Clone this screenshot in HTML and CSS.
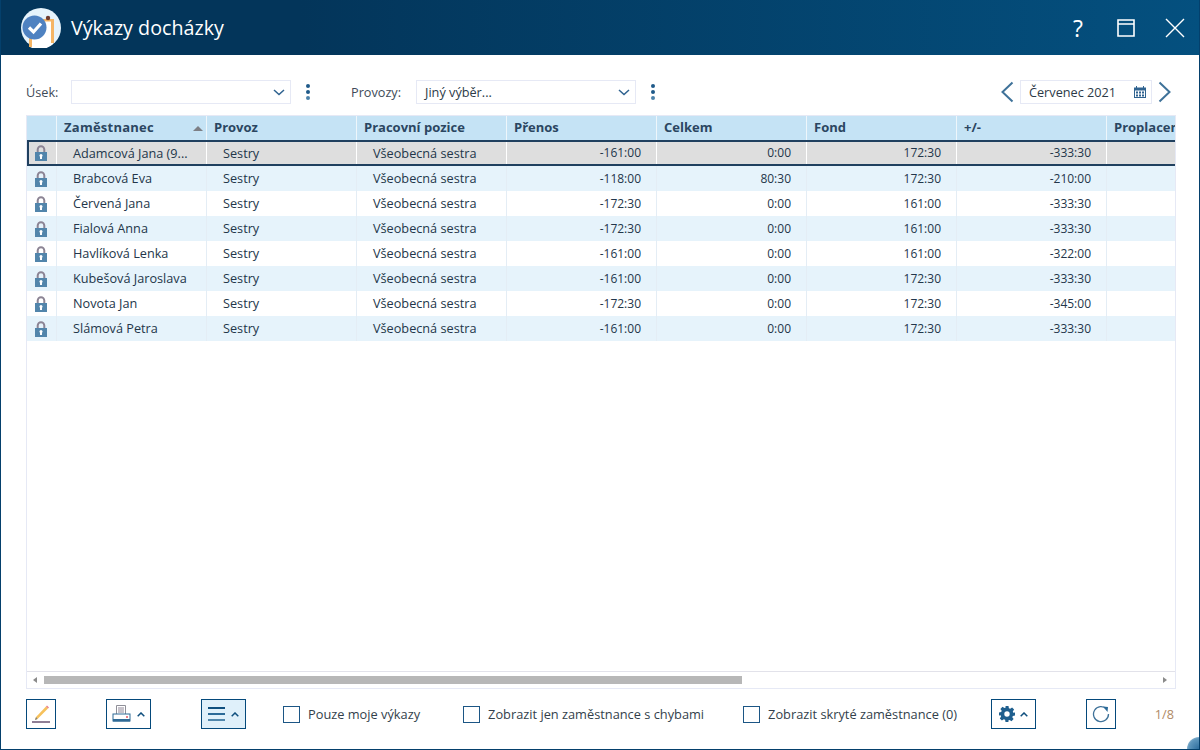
FILE: index.html
```html
<!DOCTYPE html>
<html lang="cs">
<head>
<meta charset="utf-8">
<title>Výkazy docházky</title>
<link rel="stylesheet" href="styles.css">
</head>
<body>
<div class="window">
  <header class="titlebar">
    <svg class="logo" width="40" height="40" viewBox="0 0 40 40">
      <circle cx="20" cy="20" r="20" fill="#e6f3fb"/>
      <path d="M9 39V12h23v24a20 20 0 0 1-23 3z" fill="#fff"/>
      <path d="M8 30h3v9H8zM30 12h3v23h-3zM14 11h19v2.500H14z" fill="#f5b565"/>
      <circle cx="27" cy="10" r="2.200" fill="#6e3b2e"/>
      <circle cx="13.500" cy="19.500" r="12" fill="#4f82c1"/>
      <path d="M8 19.500l4.500 4.500L20 15.500" fill="none" stroke="#fff" stroke-width="3.200"/>
    </svg>
    <h1 class="title">Výkazy docházky</h1>
    <div class="winbtns">
      <span class="help">?</span>
      <svg width="18" height="18" viewBox="0 0 18 18"><path d="M1 1h16v16H1zM1 5h16" fill="none" stroke="#fff" stroke-width="1.600"/></svg>
      <svg width="20" height="20" viewBox="0 0 20 20"><path d="M1 1l18 18M19 1L1 19" fill="none" stroke="#fff" stroke-width="1.400"/></svg>
    </div>
  </header>

  <main class="content">
    <div class="filters">
      <label class="flabel">Úsek:</label>
      <div class="select usek"><span></span><svg class="chev" width="12" height="7" viewBox="0 0 12 7"><path d="M1 1l5 4.500L11 1" fill="none" stroke="#2f6390" stroke-width="1.500"/></svg></div>
      <svg class="dots" width="6" height="18" viewBox="0 0 6 18"><circle cx="3" cy="3" r="2" fill="#1f5a8a"/><circle cx="3" cy="9" r="2" fill="#1f5a8a"/><circle cx="3" cy="15" r="2" fill="#4c82aa"/></svg>
      <label class="flabel provozy-l">Provozy:</label>
      <div class="select provozy"><span>Jiný výběr...</span><svg class="chev" width="12" height="7" viewBox="0 0 12 7"><path d="M1 1l5 4.500L11 1" fill="none" stroke="#2f6390" stroke-width="1.500"/></svg></div>
      <svg class="dots" width="6" height="18" viewBox="0 0 6 18"><circle cx="3" cy="3" r="2" fill="#1f5a8a"/><circle cx="3" cy="9" r="2" fill="#1f5a8a"/><circle cx="3" cy="15" r="2" fill="#4c82aa"/></svg>
      <div class="period">
        <svg width="14" height="22" viewBox="0 0 14 22"><path d="M12.500 1.500L2.500 11l10 9.500" fill="none" stroke="#3f7299" stroke-width="2"/></svg>
        <div class="month"><span>Červenec 2021</span>
          <svg width="12" height="12" viewBox="0 0 12 12"><path d="M0 1.500h12V12H0z" fill="#2f6390"/><path d="M1 4.500h10V11H1z" fill="#fff"/><path d="M2.500 0v2M9.500 0v2" stroke="#2f6390"/><path d="M2 5.500h2v2H2zM5 5.500h2v2H5zM8 5.500h2v2H8zM2 8.500h2v2H2zM5 8.500h2v2H5zM8 8.500h2v2H8z" fill="#2f6390"/></svg>
        </div>
        <svg width="14" height="22" viewBox="0 0 14 22"><path d="M1.500 1.500l10 9.500-10 9.500" fill="none" stroke="#3f7299" stroke-width="2"/></svg>
      </div>
    </div>

    <section class="grid">
      <div class="viewport">
        <div class="row head">
          <div class="c lock"></div>
          <div class="c name">Zaměstnanec<i class="sort"></i></div>
          <div class="c">Provoz</div>
          <div class="c">Pracovní pozice</div>
          <div class="c">Přenos</div>
          <div class="c">Celkem</div>
          <div class="c">Fond</div>
          <div class="c">+/-</div>
          <div class="c">Proplacené</div>
        </div>
        <div class="row sel">
          <div class="c lock"><svg class="lk" width="12" height="16" viewBox="0 0 12 16"><use href="#lock"/></svg></div>
          <div class="c t name">Adamcová Jana (9...</div><div class="c t">Sestry</div><div class="c t">Všeobecná sestra</div>
          <div class="c n">-161:00</div><div class="c n">0:00</div><div class="c n">172:30</div><div class="c n">-333:30</div><div class="c n"></div>
        </div>
        <div class="row alt">
          <div class="c lock"><svg class="lk" width="12" height="16" viewBox="0 0 12 16"><use href="#lock"/></svg></div>
          <div class="c t name">Brabcová Eva</div><div class="c t">Sestry</div><div class="c t">Všeobecná sestra</div>
          <div class="c n">-118:00</div><div class="c n">80:30</div><div class="c n">172:30</div><div class="c n">-210:00</div><div class="c n"></div>
        </div>
        <div class="row">
          <div class="c lock"><svg class="lk" width="12" height="16" viewBox="0 0 12 16"><use href="#lock"/></svg></div>
          <div class="c t name">Červená Jana</div><div class="c t">Sestry</div><div class="c t">Všeobecná sestra</div>
          <div class="c n">-172:30</div><div class="c n">0:00</div><div class="c n">161:00</div><div class="c n">-333:30</div><div class="c n"></div>
        </div>
        <div class="row alt">
          <div class="c lock"><svg class="lk" width="12" height="16" viewBox="0 0 12 16"><use href="#lock"/></svg></div>
          <div class="c t name">Fialová Anna</div><div class="c t">Sestry</div><div class="c t">Všeobecná sestra</div>
          <div class="c n">-172:30</div><div class="c n">0:00</div><div class="c n">161:00</div><div class="c n">-333:30</div><div class="c n"></div>
        </div>
        <div class="row">
          <div class="c lock"><svg class="lk" width="12" height="16" viewBox="0 0 12 16"><use href="#lock"/></svg></div>
          <div class="c t name">Havlíková Lenka</div><div class="c t">Sestry</div><div class="c t">Všeobecná sestra</div>
          <div class="c n">-161:00</div><div class="c n">0:00</div><div class="c n">161:00</div><div class="c n">-322:00</div><div class="c n"></div>
        </div>
        <div class="row alt">
          <div class="c lock"><svg class="lk" width="12" height="16" viewBox="0 0 12 16"><use href="#lock"/></svg></div>
          <div class="c t name">Kubešová Jaroslava</div><div class="c t">Sestry</div><div class="c t">Všeobecná sestra</div>
          <div class="c n">-161:00</div><div class="c n">0:00</div><div class="c n">172:30</div><div class="c n">-333:30</div><div class="c n"></div>
        </div>
        <div class="row">
          <div class="c lock"><svg class="lk" width="12" height="16" viewBox="0 0 12 16"><use href="#lock"/></svg></div>
          <div class="c t name">Novota Jan</div><div class="c t">Sestry</div><div class="c t">Všeobecná sestra</div>
          <div class="c n">-172:30</div><div class="c n">0:00</div><div class="c n">172:30</div><div class="c n">-345:00</div><div class="c n"></div>
        </div>
        <div class="row alt">
          <div class="c lock"><svg class="lk" width="12" height="16" viewBox="0 0 12 16"><use href="#lock"/></svg></div>
          <div class="c t name">Slámová Petra</div><div class="c t">Sestry</div><div class="c t">Všeobecná sestra</div>
          <div class="c n">-161:00</div><div class="c n">0:00</div><div class="c n">172:30</div><div class="c n">-333:30</div><div class="c n"></div>
        </div>
      </div>
      <div class="hscroll">
        <i class="arr left"></i>
        <div class="track"><div class="thumb"></div></div>
        <i class="arr right"></i>
      </div>
    </section>

    <footer class="toolbar">
      <button class="btn b-edit" type="button">
        <svg width="20" height="20" viewBox="0 0 20 20"><path d="M5 13L15 2.500l2 2L6.500 15 4 16z" fill="#f6c15c"/><path d="M15 2.500l1-1 2 2-1 1z" fill="#ea7f88"/><path d="M4 16l1-3 1.500 2z" fill="#7f7f7f"/><rect x="1" y="17" width="18" height="2" fill="#8f7f95"/></svg>
      </button>
      <button class="btn b-print" type="button">
        <svg width="20" height="20" viewBox="0 0 20 20"><path d="M4.500 1.500h9v9h-9z" fill="#fff" stroke="#8f8f98"/><rect x="6" y="3" width="6" height="6" fill="#c8c4cc"/><rect x="1" y="10" width="17" height="7" fill="#fff" stroke="#2f6a96"/><rect x="1" y="15" width="17" height="2.500" fill="#2f6a96"/><rect x="14" y="12" width="2" height="2" fill="#ea7f88"/></svg>
        <svg class="up" width="8" height="5" viewBox="0 0 8 5"><path d="M.7 4.300L4 1l3.300 3.300" fill="none" stroke="#0f4f7e" stroke-width="1.500"/></svg>
      </button>
      <button class="btn b-menu" type="button">
        <svg width="18" height="14" viewBox="0 0 18 14"><rect y="0" width="17" height="2" fill="#0f4f7e"/><rect y="6" width="17" height="2" fill="#2a6a98"/><rect y="12" width="17" height="2" fill="#4f86ab"/></svg>
        <svg class="up" width="8" height="5" viewBox="0 0 8 5"><path d="M.7 4.300L4 1l3.300 3.300" fill="none" stroke="#0f4f7e" stroke-width="1.500"/></svg>
      </button>
      <label class="check c1"><i class="box"></i>Pouze moje výkazy</label>
      <label class="check c2"><i class="box"></i>Zobrazit jen zaměstnance s chybami</label>
      <label class="check c3"><i class="box"></i>Zobrazit skryté zaměstnance (0)</label>
      <button class="btn b-gear" type="button">
        <svg width="16" height="16" viewBox="0 0 16 16"><path fill="#1f5f8e" fill-rule="evenodd" d="M6.500 0h3l.4 2.200 1.300.6L13.100 1.500l2 2.100-1.300 1.900.5 1.300L16 6.500v3l-2.200.4-.5 1.300 1.300 1.900-2.100 2.100-1.900-1.300-1.300.5L9.500 16h-3l-.4-2.200-1.300-.5-1.900 1.300-2.100-2.100 1.300-1.900-.5-1.300L0 9.500v-3l2.200-.4.500-1.300-1.300-1.900 2.100-2.100 1.900 1.300 1.300-.6zM8 5.300a2.700 2.700 0 1 0 0 5.400 2.700 2.700 0 0 0 0-5.400z"/></svg>
        <svg class="up" width="8" height="5" viewBox="0 0 8 5"><path d="M.7 4.300L4 1l3.300 3.300" fill="none" stroke="#0f4f7e" stroke-width="1.500"/></svg>
      </button>
      <button class="btn b-refresh" type="button">
        <svg width="18" height="18" viewBox="0 0 18 18"><path d="M14.500 4A7.500 7.500 0 1 0 16.500 9" fill="none" stroke="#3f7299" stroke-width="1.300"/><path d="M11 1.500l5 .5-.5 5z" fill="#2a6a98"/></svg>
      </button>
      <span class="pager">1/8</span>
    </footer>
  </main>
  <i class="corner"></i>
</div>
<svg class="defs" width="0" height="0"><defs><g id="lock"><path d="M2.700 7V4.500a3.300 3.300 0 0 1 6.600 0V7" fill="none" stroke="#8c8494" stroke-width="2"/><path d="M0 7h12v9H0z" fill="#5285ab"/><circle cx="6" cy="10.500" r="1.500" fill="#fff"/><rect x="5" y="10.500" width="2" height="3.500" fill="#fff"/></g></defs></svg>
</body>
</html>
```

FILE: styles.css
```css
* { box-sizing: border-box; }
html, body { margin: 0; padding: 0; }
body {
  width: 1200px;
  height: 750px;
  overflow: hidden;
  font-family: "Open Sans", sans-serif;
  font-size: 12.7px;
  color: #23364a;
  background: #fff;
}
.window {
  position: relative;
  width: 1200px;
  height: 750px;
  display: flex;
  flex-direction: column;
  border: 1px solid #04406c;
  border-top: 0;
  overflow: hidden;
}
.titlebar {
  height: 55px;
  margin: 0 -1px;
  flex: none;
  display: flex;
  align-items: center;
  padding-left: 21px;
  background: linear-gradient(90deg, #03355a 0%, #03355a 25%, #04507f 100%);
  color: #fff;
}
.logo { flex: none; }
.title {
  margin: 0 0 0 10px;
  font-size: 19.7px;
  font-weight: 400;
  line-height: 55px;
}
.winbtns {
  margin-left: auto;
  display: flex;
  align-items: center;
  padding-right: 15px;
}
.help { font-size: 23px; line-height: 28px; width: 14px; margin-right: 32px; margin-left: 1px; text-align: center; }
.winbtns svg:nth-of-type(1) { margin-right: 30px; }
.content {
  flex: 1;
  display: flex;
  flex-direction: column;
  padding: 25px 23px 0 25px;
}
.filters {
  height: 24px;
  display: flex;
  align-items: center;
}
.flabel { color: #3e4b58; width: 45px; }
.provozy-l { width: 65px; margin-left: 40px; }
.select {
  height: 24px;
  border: 1px solid #e6e9f5;
  display: flex;
  align-items: center;
  justify-content: space-between;
  padding: 0 5px 0 8px;
  color: #2c3a48;
}
.usek { width: 220px; }
.provozy { width: 220px; }
.dots { margin-left: 14px; flex: none; }
.period {
  margin-left: auto;
  display: flex;
  align-items: center;
  gap: 6px;
  margin-right: 4px;
}
.month {
  width: 132px;
  height: 24px;
  border: 1px solid #e6e9f5;
  display: flex;
  align-items: center;
  justify-content: space-between;
  padding: 0 5px 0 8px;
  color: #2c3a48;
}
.grid {
  margin-top: 11px;
  width: 1150px;
  height: 574px;
  border: 1px solid #e6e9f5;
  display: flex;
  flex-direction: column;
}
.viewport { flex: 1; overflow: hidden; }
.row {
  display: grid;
  grid-template-columns: 30px repeat(8, 150px);
  height: 25px;
}
.c {
  border-right: 1px solid #e4edf5;
  line-height: 25px;
  white-space: nowrap;
  overflow: hidden;
}
.head {
  height: 24px;
  background: #c5e3f5;
  font-weight: 700;
  font-size: 13px;
  color: #2b4661;
}
.head .c {
  border-right: 1px solid #eef6fb;
  line-height: 23px;
  padding-left: 7px;
  position: relative;
}
.head .name { padding-left: 7px; letter-spacing: .25px; }
.sort {
  position: absolute;
  right: 3px;
  top: 10px;
  border: 5px solid transparent;
  border-top: 0;
  border-bottom: 5px solid #7d7f85;
}
.alt { background: #e6f3fb; }
.t { padding-left: 16px; }
.n { text-align: right; padding-right: 15px; font-size: 12px; }
.lock { display: flex; align-items: center; justify-content: center; padding-right: 2px; }
.lk { display: block; }
.sel {
  height: 26px;
  background: #dedede;
  border-top: 2px solid #20405f;
  border-bottom: 2px solid #20405f;
  box-shadow: inset 2px 0 0 #20405f;
}
.sel .c { line-height: 22px; border-right-color: #fff; }
.hscroll {
  height: 17px;
  flex: none;
  border-top: 1px solid #e2e2ea;
  display: flex;
  align-items: center;
  padding: 0 8px 0 6px;
}
.track { flex: 1; margin: 0 8px 0 7px; height: 8px; }
.thumb { width: 698px; height: 8px; background: #b7b7b7; }
.arr { flex: none; border: 3px solid transparent; }
.arr.left { border-left: 0; border-right: 4px solid #8a8a8a; }
.arr.right { border-right: 0; border-left: 4px solid #8a8a8a; }
.toolbar {
  margin-top: 10px;
  display: flex;
  align-items: center;
  height: 30px;
}
.btn {
  flex: none;
  height: 30px;
  padding: 0;
  border: 1px solid #04497b;
  background: #fff;
  display: flex;
  align-items: center;
  justify-content: center;
  gap: 5px;
}
.b-edit { width: 30px; }
.b-print { width: 45px; margin-left: 50px; }
.b-menu { width: 45px; margin-left: 50px; background: #dff0fa; }
.b-gear { width: 45px; margin-left: 34px; }
.b-refresh { width: 30px; margin-left: 50px; }
.check {
  display: flex;
  align-items: center;
  gap: 8px;
  color: #333f4b;
  white-space: nowrap;
  font-size: 12.8px;
}
.box { width: 17px; height: 17px; border: 1px solid #1c5685; background: #fff; flex: none; }
.c1 { margin-left: 37px; }
.c2 { margin-left: 43px; }
.c3 { margin-left: 39px; }
.pager { margin-left: auto; color: #b08a66; padding-right: 2px; }
.corner {
  position: absolute;
  right: -12px;
  bottom: -12px;
  width: 24px;
  height: 24px;
  border-radius: 50%;
  background: radial-gradient(circle, #2c6c9c 0%, #5f97bd 60%, rgba(200,225,240,.4) 100%);
}
.defs { position: absolute; }
```
